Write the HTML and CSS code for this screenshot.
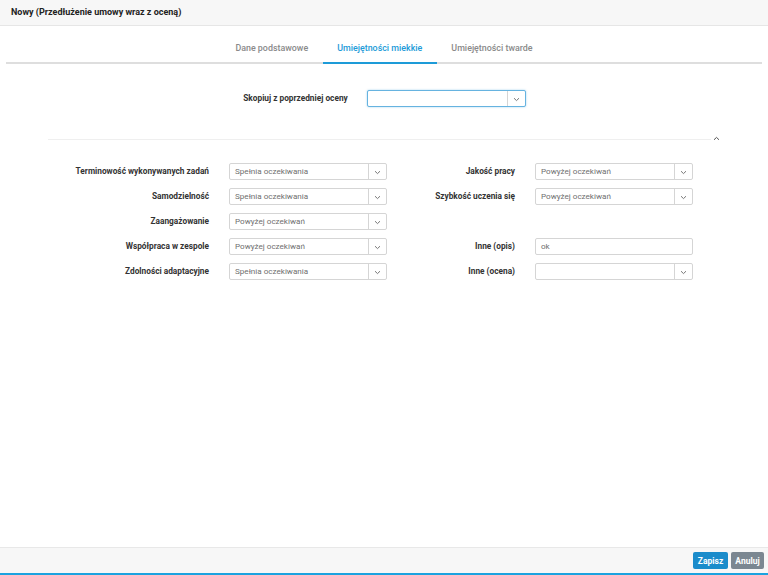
FILE: index.html
```html
<!DOCTYPE html>
<html lang="pl">
<head>
<meta charset="utf-8">
<link rel="stylesheet" href="styles.css">
</head>
<body>
<div class="dialog">
  <div class="header">Nowy (Przedłużenie umowy wraz z oceną)</div>
  <div class="content">
    <div class="tabs">
      <div class="tab">Dane podstawowe</div>
      <div class="tab active">Umiejętności miekkie</div>
      <div class="tab">Umiejętności twarde</div>
    </div>
    <div class="copy-row">
      <label class="lbl">Skopiuj z poprzedniej oceny</label>
      <div class="select focus"><span class="val"></span><span class="arrow"><svg width="7" height="5" viewBox="0 0 7 5"><path d="M1 1.2 L3.5 3.6 L6 1.2" fill="none" stroke="#777" stroke-width="1"/></svg></span></div>
    </div>
    <div class="sep-row"><div class="sep"></div><svg class="caret" width="7" height="5" viewBox="0 0 7 5"><path d="M1 3.8 L3.5 1.4 L6 3.8" fill="none" stroke="#555" stroke-width="1"/></svg></div>
    <div class="grid">
      <label class="lbl">Terminowość wykonywanych zadań</label>
      <div class="select"><span class="val">Spełnia oczekiwania</span><span class="arrow"><svg width="7" height="5" viewBox="0 0 7 5"><path d="M1 1.2 L3.5 3.6 L6 1.2" fill="none" stroke="#777" stroke-width="1"/></svg></span></div>
      <label class="lbl">Jakość pracy</label>
      <div class="select"><span class="val">Powyżej oczekiwań</span><span class="arrow"><svg width="7" height="5" viewBox="0 0 7 5"><path d="M1 1.2 L3.5 3.6 L6 1.2" fill="none" stroke="#777" stroke-width="1"/></svg></span></div>

      <label class="lbl">Samodzielność</label>
      <div class="select"><span class="val">Spełnia oczekiwania</span><span class="arrow"><svg width="7" height="5" viewBox="0 0 7 5"><path d="M1 1.2 L3.5 3.6 L6 1.2" fill="none" stroke="#777" stroke-width="1"/></svg></span></div>
      <label class="lbl">Szybkość uczenia się</label>
      <div class="select"><span class="val">Powyżej oczekiwań</span><span class="arrow"><svg width="7" height="5" viewBox="0 0 7 5"><path d="M1 1.2 L3.5 3.6 L6 1.2" fill="none" stroke="#777" stroke-width="1"/></svg></span></div>

      <label class="lbl">Zaangażowanie</label>
      <div class="select"><span class="val">Powyżej oczekiwań</span><span class="arrow"><svg width="7" height="5" viewBox="0 0 7 5"><path d="M1 1.2 L3.5 3.6 L6 1.2" fill="none" stroke="#777" stroke-width="1"/></svg></span></div>
      <div></div>
      <div></div>

      <label class="lbl">Współpraca w zespole</label>
      <div class="select"><span class="val">Powyżej oczekiwań</span><span class="arrow"><svg width="7" height="5" viewBox="0 0 7 5"><path d="M1 1.2 L3.5 3.6 L6 1.2" fill="none" stroke="#777" stroke-width="1"/></svg></span></div>
      <label class="lbl">Inne (opis)</label>
      <div class="input">ok</div>

      <label class="lbl">Zdolności adaptacyjne</label>
      <div class="select"><span class="val">Spełnia oczekiwania</span><span class="arrow"><svg width="7" height="5" viewBox="0 0 7 5"><path d="M1 1.2 L3.5 3.6 L6 1.2" fill="none" stroke="#777" stroke-width="1"/></svg></span></div>
      <label class="lbl">Inne (ocena)</label>
      <div class="select"><span class="val"></span><span class="arrow"><svg width="7" height="5" viewBox="0 0 7 5"><path d="M1 1.2 L3.5 3.6 L6 1.2" fill="none" stroke="#777" stroke-width="1"/></svg></span></div>
    </div>
  </div>
  <div class="footer">
    <button class="btn primary">Zapisz</button>
    <button class="btn secondary">Anuluj</button>
  </div>
</div>
</body>
</html>
```
FILE: styles.css
```css
* { box-sizing: border-box; }
html, body { margin: 0; padding: 0; }
body {
  font-family: Roboto, "Liberation Sans", Arial, sans-serif;
  background: #fff;
  color: #333;
}
.dialog {
  width: 768px;
  height: 575px;
  display: flex;
  flex-direction: column;
  border-bottom: 2px solid #1ba3e0;
}
.header {
  height: 26px;
  background: #f7f7f7;
  border-bottom: 1px solid #e6e6e6;
  padding-left: 11px;
  font-size: 9px;
  font-weight: 700;
  line-height: 25px;
  color: #222;
}
.content {
  flex: 1;
}
.tabs {
  margin: 8px 6px 0;
  border-bottom: 2px solid #dedede;
  display: flex;
  justify-content: center;
}
.tab {
  padding: 8px 14.5px 8px;
  font-size: 8.9px;
  line-height: 12px;
  color: #8a8a8a;
  font-weight: 500;
  margin-bottom: -2px;
  border-bottom: 2px solid transparent;
}
.tab.active {
  color: #1d9bd8;
  border-bottom-color: #1d9bd8;
}
.copy-row {
  margin-top: 26px;
  display: flex;
  justify-content: center;
  align-items: center;
  gap: 19px;
  padding-left: 1px;
}
.copy-row .select { width: 159px; }
.lbl {
  font-size: 8.3px;
  font-weight: 700;
  color: #333;
  text-align: right;
  line-height: 17px;
  white-space: nowrap;
}
.select {
  height: 17px;
  border: 1px solid #d5d5d5;
  border-radius: 2px;
  display: flex;
  align-items: stretch;
  background: #fff;
}
.select.focus {
  border-color: #66b3e0;
  box-shadow: 0 0 2px rgba(60, 160, 220, 0.5);
}
.select .val {
  flex: 1;
  font-size: 8.1px;
  color: #6f6f6f;
  line-height: 15px;
  padding-left: 5px;
}
.select .arrow {
  width: 18px;
  border-left: 1px solid #d5d5d5;
  display: flex;
  align-items: center;
  justify-content: center;
  padding-top: 1px;
}
.input {
  height: 17px;
  border: 1px solid #d5d5d5;
  border-radius: 2px;
  font-size: 8.1px;
  color: #6f6f6f;
  line-height: 15px;
  padding-left: 5px;
}
.sep-row {
  margin: 32px 0 0 48px;
  display: flex;
  align-items: center;
  height: 1px;
}
.sep {
  width: 663px;
  height: 1px;
  background: #efefef;
}
.caret {
  margin-left: 2px;
  position: relative;
  top: -1px;
}
.grid {
  margin: 23px 0 0 48px;
  display: grid;
  grid-template-columns: 161px 158px 108px 158px;
  column-gap: 20px;
  row-gap: 8px;
}
.footer {
  height: 26px;
  background: #f7f7f7;
  border-top: 1px solid #e8e8e8;
  display: flex;
  justify-content: flex-end;
  align-items: center;
  gap: 3px;
  padding-right: 4px;
}
.btn {
  height: 17px;
  border: none;
  border-radius: 2px;
  font-family: Roboto, "Liberation Sans", Arial, sans-serif;
  font-size: 8.5px;
  font-weight: 700;
  color: #fff;
  padding: 0;
  cursor: pointer;
}
.btn.primary { background: #1b8ccb; width: 35px; }
.btn.secondary { background: #7b8791; width: 33px; }
```
